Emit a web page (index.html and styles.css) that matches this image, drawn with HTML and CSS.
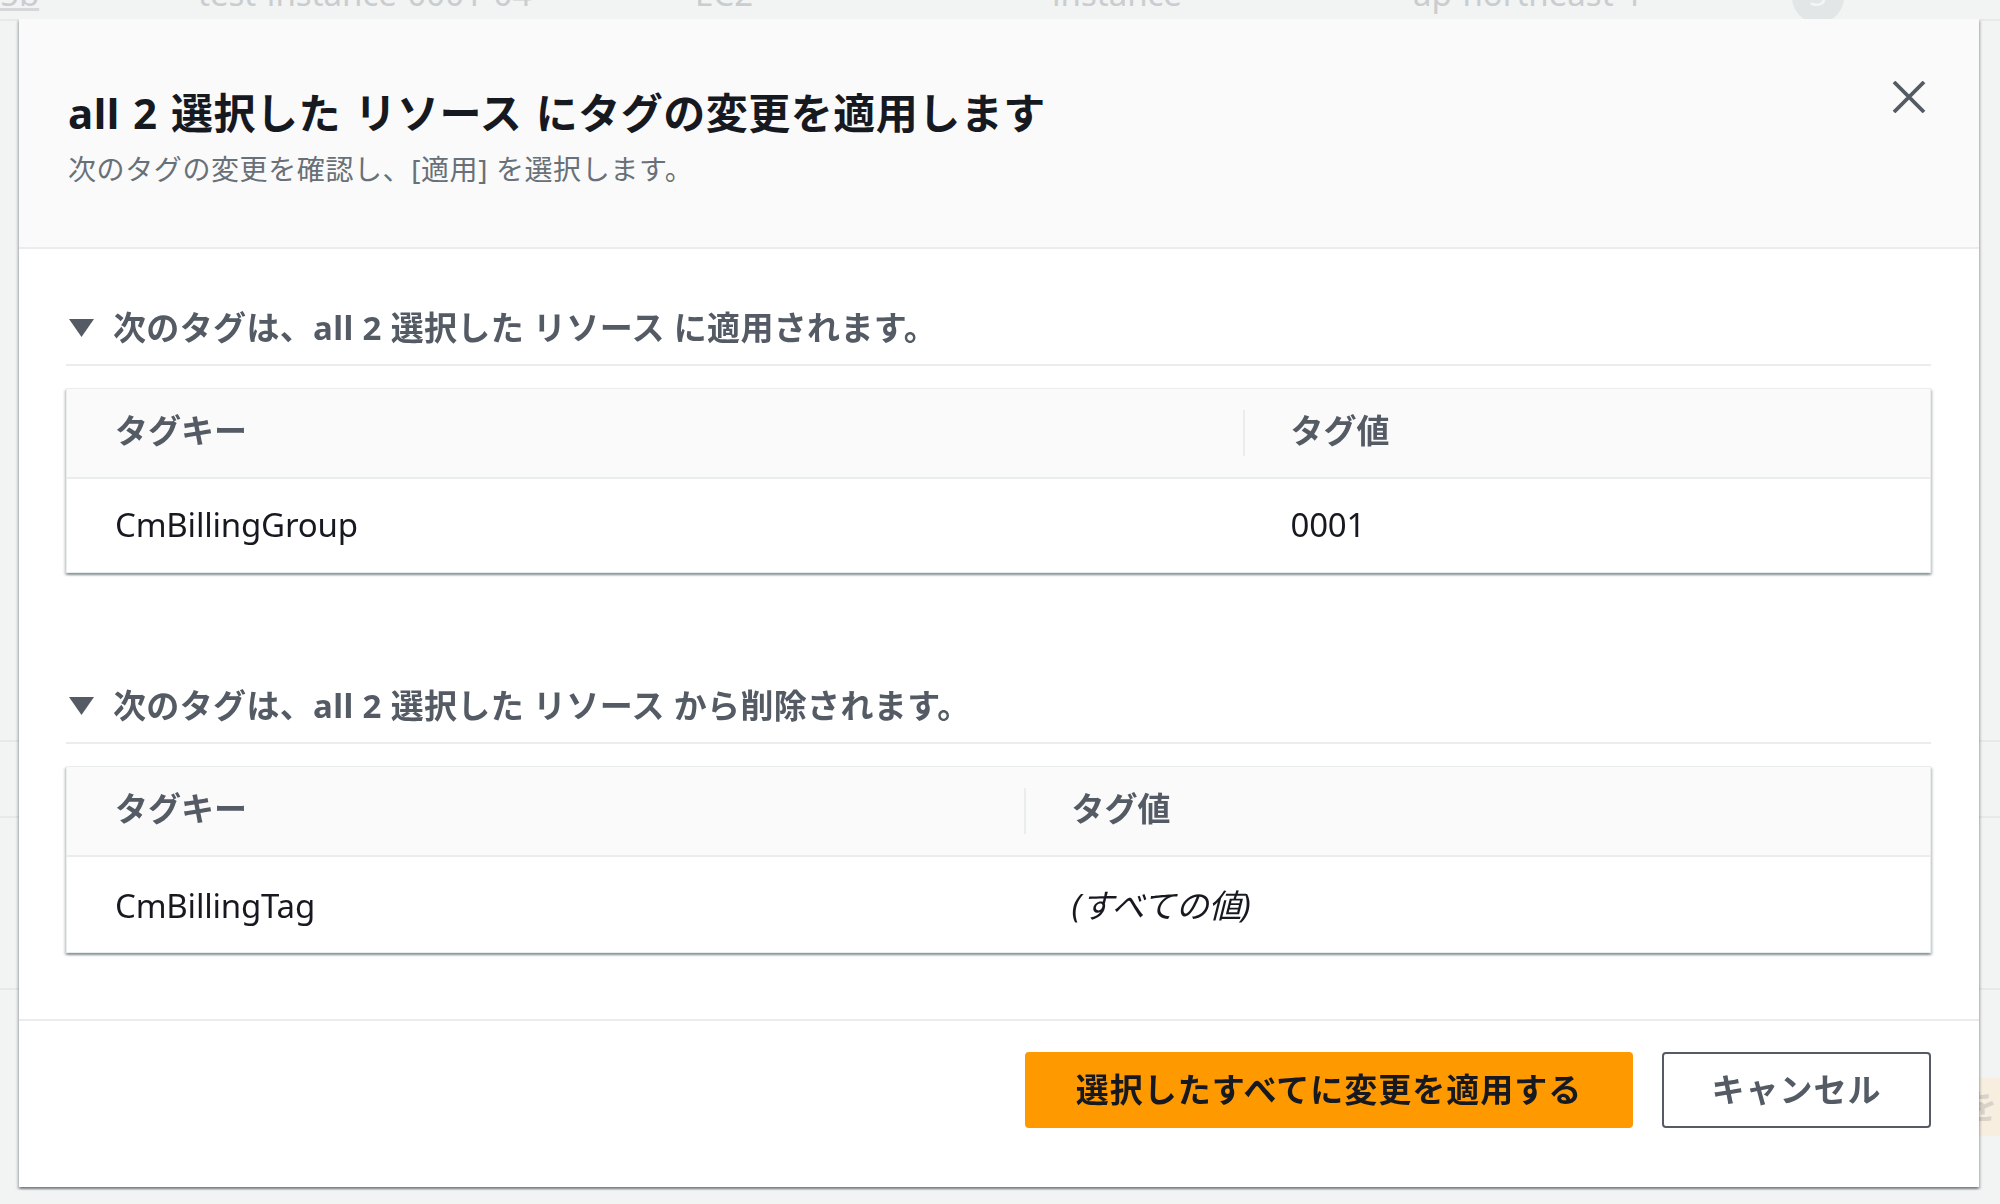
FILE: index.html
```html
<!DOCTYPE html>
<html lang="ja">
<head>
<meta charset="utf-8">
<title>タグの変更を適用</title>
<link rel="stylesheet" href="styles.css">
</head>
<body>
<div class="page">
  <div class="bg-row">
    <span class="bg-cell bg-link">5b</span>
    <span class="bg-cell">test-instance-0001-04</span>
    <span class="bg-cell">EC2</span>
    <span class="bg-cell">instance</span>
    <span class="bg-cell">ap-northeast-1</span>
    <span class="bg-cell"><span class="bg-badge">5</span></span>
  </div>
  <div class="bg-line l1"></div>
  <div class="bg-line l2"></div>
  <div class="bg-line l3"></div>
  <div class="bg-line l4"></div>
  <div class="bg-btn-row"><span class="bg-btn">を</span></div>
</div>

<div class="modal" role="dialog">
  <header class="modal-header">
    <div class="header-text">
      <h1 class="title">all 2 選択した リソース にタグの変更を適用します</h1>
      <p class="subtitle">次のタグの変更を確認し、[適用] を選択します。</p>
    </div>
    <button class="close" aria-label="閉じる">
      <svg width="34" height="32" viewBox="0 0 34 32"><path d="M2 1 L32 31 M32 1 L2 31" stroke="#545b64" stroke-width="3.8" fill="none"/></svg>
    </button>
  </header>

  <div class="modal-body">
    <section class="section">
      <h2 class="section-head">
        <svg class="caret" width="25" height="18" viewBox="0 0 25 18"><polygon points="0,0 25,0 12.5,18" fill="#545b64"/></svg>
        <span>次のタグは、all 2 選択した リソース に適用されます。</span>
      </h2>
      <table class="tags t1">
        <colgroup><col class="c1a"><col></colgroup>
        <thead><tr><th>タグキー</th><th>タグ値</th></tr></thead>
        <tbody><tr><td>CmBillingGroup</td><td>0001</td></tr></tbody>
      </table>
    </section>

    <section class="section second">
      <h2 class="section-head">
        <svg class="caret" width="25" height="18" viewBox="0 0 25 18"><polygon points="0,0 25,0 12.5,18" fill="#545b64"/></svg>
        <span>次のタグは、all 2 選択した リソース から削除されます。</span>
      </h2>
      <table class="tags t2">
        <colgroup><col class="c2a"><col></colgroup>
        <thead><tr><th>タグキー</th><th>タグ値</th></tr></thead>
        <tbody><tr><td>CmBillingTag</td><td class="all-values">(すべての値)</td></tr></tbody>
      </table>
    </section>
  </div>

  <footer class="modal-footer">
    <button class="btn primary">選択したすべてに変更を適用する</button>
    <button class="btn secondary">キャンセル</button>
  </footer>
</div>
</body>
</html>
```

FILE: styles.css
```css
* { box-sizing: border-box; }

html, body {
  margin: 0;
  padding: 0;
  width: 2000px;
  height: 1204px;
  overflow: hidden;
  background: #f2f3f3;
  font-family: "Noto Sans", "Noto Sans CJK JP", sans-serif;
}

/* faint page behind the dialog */
.page {
  width: 2000px;
  height: 1204px;
  background: #f2f3f3;
  overflow: hidden;
}

.bg-row {
  display: grid;
  grid-template-columns: 198px 497px 357px 361px 379px 1fr;
  margin-top: -28px;
  height: 46px;
  font-size: 33px;
  line-height: 44px;
  color: #c9cdcf;
  white-space: nowrap;
}

.bg-link {
  text-decoration: underline;
  text-decoration-color: #d5d8da;
}

.bg-badge {
  display: inline-block;
  width: 52px;
  height: 74px;
  margin-top: -26px;
  border-radius: 26px;
  background: #e3e6e7;
  color: #f4f5f5;
  text-align: center;
  line-height: 90px;
}

.bg-line {
  height: 2px;
  background: #e6e8e9;
}
.l1 { margin-top: 1px; }
.l2 { margin-top: 719px; }
.l3 { margin-top: 74px; }
.l4 { margin-top: 170px; }

.bg-btn-row {
  display: flex;
  justify-content: flex-end;
  margin-top: 88px;
}
.bg-btn {
  width: 80px;
  height: 58px;
  margin-right: -40px;
  background: #f7eee0;
  color: #d8d2c8;
  font-size: 33px;
  font-weight: 700;
  line-height: 58px;
  padding-left: 4px;
}

/* dialog */
.modal {
  position: fixed;
  top: 19px;
  left: 19px;
  width: 1960px;
  height: 1168px;
  background: #ffffff;
  box-shadow: 0 2px 2px 0 rgba(0, 28, 36, 0.35), 2px 2px 2px 0 rgba(0, 28, 36, 0.15), -2px 2px 2px 0 rgba(0, 28, 36, 0.15);
  display: flex;
  flex-direction: column;
}

.modal-header {
  display: flex;
  justify-content: space-between;
  align-items: flex-start;
  height: 230px;
  padding: 69px 48px 0 49px;
  background: #fafafa;
  border-bottom: 2px solid #eaeded;
}

.title {
  margin: 0;
  font-size: 42px;
  line-height: 50px;
  font-weight: 700;
  color: #16191f;
  letter-spacing: 0.5px;
  word-spacing: 2px;
}

.subtitle {
  margin: 10px 0 0;
  font-size: 28px;
  line-height: 42px;
  color: #687078;
  letter-spacing: 0.6px;
}

.close {
  width: 44px;
  height: 44px;
  margin-top: -13px;
  padding: 0;
  border: 0;
  background: transparent;
  display: flex;
  align-items: center;
  justify-content: center;
}

.modal-body {
  height: 772px;
  padding: 57px 48px 0 47px;
  border-bottom: 2px solid #eaeded;
}

.section-head {
  display: flex;
  align-items: center;
  gap: 19px;
  margin: 0;
  padding: 0 0 14px 3px;
  border-bottom: 2px solid #eaeded;
  font-size: 33px;
  line-height: 44px;
  font-weight: 700;
  color: #545b64;
  letter-spacing: 0.35px;
}

.caret { flex: none; }

.second { margin-top: 111px; }

.tags {
  width: 100%;
  margin-top: 22px;
  border-collapse: collapse;
  table-layout: fixed;
  border: 1px solid #eaeded;
  box-shadow: 0 2px 2px 0 rgba(0, 28, 36, 0.3), 2px 2px 2px 0 rgba(0, 28, 36, 0.12), -2px 2px 2px 0 rgba(0, 28, 36, 0.12);
}

.c1a { width: 1176px; }
.c2a { width: 957px; }

.tags th {
  height: 89px;
  padding: 0 0 4px 48px;
  background: #fafafa;
  border-bottom: 2px solid #eaeded;
  text-align: left;
  font-size: 33px;
  font-weight: 700;
  color: #545b64;
  line-height: 44px;
}

.tags th + th {
  background-image: linear-gradient(#eaeded, #eaeded);
  background-size: 2px 46px;
  background-position: left center;
  background-repeat: no-repeat;
}

.tags td {
  height: 95px;
  padding: 0 0 0 48px;
  font-size: 33px;
  line-height: 44px;
  color: #16191f;
  letter-spacing: -0.2px;
}

.t2 td { height: 97px; padding-top: 3px; }

.all-values { font-style: italic; }

.modal-footer {
  display: flex;
  justify-content: flex-end;
  gap: 29px;
  padding: 31px 48px 0 0;
}

.btn {
  height: 76px;
  border-radius: 4px;
  font-family: "Noto Sans", "Noto Sans CJK JP", sans-serif;
  font-size: 33px;
  font-weight: 700;
  line-height: 44px;
  letter-spacing: 1px;
  cursor: pointer;
}

.primary {
  width: 608px;
  background: #ff9900;
  border: 2px solid #ff9900;
  color: #16191f;
}

.secondary {
  width: 269px;
  background: #ffffff;
  border: 2px solid #545b64;
  color: #545b64;
}
```
